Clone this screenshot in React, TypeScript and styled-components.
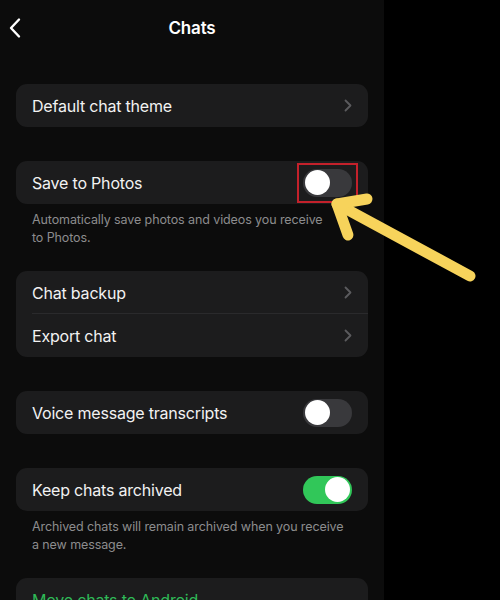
import React from 'react'
import styled, { createGlobalStyle } from 'styled-components'

const GlobalStyle = createGlobalStyle`
	html, body {
		margin: 0;
		padding: 0;
		background: #000;
	}
	body {
		font-family: Inter, 'Noto Sans', sans-serif;
		-webkit-font-smoothing: antialiased;
	}
`

const Page = styled.div`
	position: relative;
	display: flex;
	width: 500px;
	height: 600px;
	overflow: hidden;
	background: #000;
`

const Phone = styled.div`
	width: 384px;
	height: 100%;
	background: #0c0c0c;
	display: flex;
	flex-direction: column;
	overflow: hidden;
`

const Header = styled.div`
	position: relative;
	flex-shrink: 0;
	height: 56px;
	display: flex;
	align-items: center;
	justify-content: center;
	color: #fff;
	font-size: 17px;
	font-weight: 600;
	letter-spacing: -0.2px;
`

const BackButton = styled.div`
	position: absolute;
	left: 8px;
	top: 17px;
	width: 14px;
	height: 22px;
	display: flex;
`

const Content = styled.div`
	flex-shrink: 0;
	padding: 28px 16px 0;
	display: flex;
	flex-direction: column;
`

const Section = styled.div<{ $note?: boolean }>`
	margin-bottom: ${(p) => (p.$note ? '24px' : '34px')};
`

const Card = styled.div`
	background: #1c1c1d;
	border-radius: 11px;
`

const Row = styled.div<{ $divider?: boolean }>`
	position: relative;
	height: 43px;
	display: flex;
	align-items: center;
	justify-content: space-between;
	padding: 0 16px;
	font-size: 16px;
	letter-spacing: -0.2px;

	${(p) =>
		p.$divider &&
		`
		&::after {
			content: '';
			position: absolute;
			left: 16px;
			right: 0;
			bottom: 0;
			height: 1px;
			background: #2a2a2c;
		}
	`}
`

const Label = styled.span<{ $accent?: boolean }>`
	color: ${(p) => (p.$accent ? '#2fb957' : '#f2f2f2')};
`

const Note = styled.div`
	padding: 7px 16px 0;
	color: #8c8c8e;
	font-size: 12.5px;
	line-height: 18px;
	letter-spacing: -0.1px;
`

const Highlight = styled.div`
	margin: -6px;
	padding: 4px;
	border: 2px solid #c4212b;
	display: flex;
`

const Track = styled.div<{ $on?: boolean }>`
	width: 49px;
	height: 28px;
	border-radius: 14px;
	background: ${(p) => (p.$on ? '#31c759' : '#39393c')};
	display: flex;
	align-items: center;
	justify-content: ${(p) => (p.$on ? 'flex-end' : 'flex-start')};
	padding: 0 2px;
	box-sizing: border-box;
`

const Knob = styled.div`
	width: 25px;
	height: 25px;
	border-radius: 50%;
	background: #fff;
`

const Blank = styled.div`
	flex: 1;
	background: #000;
`

const ArrowLayer = styled.svg`
	position: absolute;
	left: 0;
	top: 0;
	pointer-events: none;
`

const Chevron = () => (
	<svg width="8" height="13" viewBox="0 0 8 13">
		<path d="M1.5 1.5 L6.5 6.5 L1.5 11.5" fill="none" stroke="#5b5b5e" strokeWidth="1.8" strokeLinecap="round" strokeLinejoin="round" />
	</svg>
)

const Toggle = ({ on }: { on?: boolean }) => (
	<Track $on={on}>
		<Knob />
	</Track>
)

export default function App() {
	return (
		<Page>
			<GlobalStyle />
			<Phone>
				<Header>
					<BackButton>
						<svg width="14" height="22" viewBox="0 0 14 22">
							<path d="M11 2.5 L3 11 L11 19.5" fill="none" stroke="#fff" strokeWidth="2.4" strokeLinecap="round" strokeLinejoin="round" />
						</svg>
					</BackButton>
					Chats
				</Header>
				<Content>
					<Section>
						<Card>
							<Row>
								<Label>Default chat theme</Label>
								<Chevron />
							</Row>
						</Card>
					</Section>
					<Section $note>
						<Card>
							<Row>
								<Label>Save to Photos</Label>
								<Highlight>
									<Toggle />
								</Highlight>
							</Row>
						</Card>
						<Note>
							Automatically save photos and videos you receive
							<br />
							to Photos.
						</Note>
					</Section>
					<Section>
						<Card>
							<Row $divider>
								<Label>Chat backup</Label>
								<Chevron />
							</Row>
							<Row>
								<Label>Export chat</Label>
								<Chevron />
							</Row>
						</Card>
					</Section>
					<Section>
						<Card>
							<Row>
								<Label>Voice message transcripts</Label>
								<Toggle />
							</Row>
						</Card>
					</Section>
					<Section $note>
						<Card>
							<Row>
								<Label>Keep chats archived</Label>
								<Toggle on />
							</Row>
						</Card>
						<Note>Archived chats will remain archived when you receive a new message.</Note>
					</Section>
					<Section>
						<Card>
							<Row>
								<Label $accent>Move chats to Android</Label>
							</Row>
						</Card>
					</Section>
				</Content>
			</Phone>
			<Blank />
			<ArrowLayer width="500" height="600" viewBox="0 0 500 600">
				<g fill="none" stroke="#f7d35b" strokeWidth="11" strokeLinecap="round" strokeLinejoin="round">
					<path d="M470 276 L337 204" />
					<path d="M367 199 L337 204 L348 235" />
				</g>
			</ArrowLayer>
		</Page>
	)
}
